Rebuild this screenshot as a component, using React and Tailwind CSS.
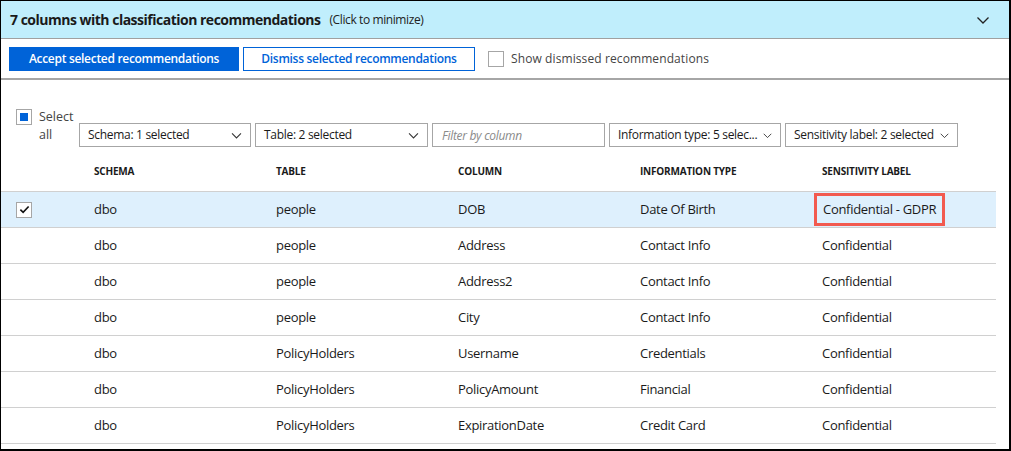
import React, { useState } from "react";

const rows = [
  { schema: "dbo", table: "people", column: "DOB", info: "Date Of Birth", label: "Confidential - GDPR", selected: true },
  { schema: "dbo", table: "people", column: "Address", info: "Contact Info", label: "Confidential" },
  { schema: "dbo", table: "people", column: "Address2", info: "Contact Info", label: "Confidential" },
  { schema: "dbo", table: "people", column: "City", info: "Contact Info", label: "Confidential" },
  { schema: "dbo", table: "PolicyHolders", column: "Username", info: "Credentials", label: "Confidential" },
  { schema: "dbo", table: "PolicyHolders", column: "PolicyAmount", info: "Financial", label: "Confidential" },
  { schema: "dbo", table: "PolicyHolders", column: "ExpirationDate", info: "Credit Card", label: "Confidential" },
];

const Chevron = ({ className }) => (
  <svg className={className} viewBox="0 0 16 16" fill="none" stroke="currentColor" strokeWidth={1.3}>
    <path d="M2.5 5.5L8 11l5.5-5.5" />
  </svg>
);

const Dropdown = ({ label, width, small }) => (
  <div
    className={`flex items-center justify-between h-[24px] border border-[#a6a6a6] bg-white pl-[8px] pr-[7px] text-[12px] tracking-[-0.3px] text-[#1a1a1a] ${width}`}
  >
    <span className="whitespace-nowrap">{label}</span>
    <Chevron
      className={`${small ? "w-[11px] h-[11px]" : "w-[13px] h-[13px]"} ml-[3px] shrink-0 text-[#333]`}
    />
  </div>
);

const App = () => {
  const [showDismissed, setShowDismissed] = useState(false);

  return (
    <div
      className="w-[1011px] h-[451px] bg-white border-t border-l border-r-2 border-b-2 border-black overflow-hidden text-[#1a1a1a]"
      style={{ fontFamily: '"Open Sans", "Noto Sans", sans-serif' }}
    >
      {/* Header bar */}
      <div className="h-[38px] bg-[#c0eefc] border-b border-[#a0a0a0] flex items-center pl-[9px] pr-[18px]">
        <span className="text-[14px] font-bold tracking-[-0.5px]">7 columns with classification recommendations</span>
        <span className="text-[12px] tracking-[-0.4px] ml-[9px] text-[#222]">(Click to minimize)</span>
        <Chevron className="w-[16px] h-[16px] ml-auto text-[#222]" />
      </div>

      {/* Toolbar */}
      <div className="h-[41px] border-b-2 border-[#a6a6a6] flex items-center pl-[8px] gap-[4px]">
        <button className="h-[24px] w-[230px] bg-[#0063d8] text-white text-[12px] font-semibold tracking-[-0.3px]">
          Accept selected recommendations
        </button>
        <button className="h-[24px] w-[232px] bg-white border border-[#0063d8] text-[#0063d8] text-[12px] font-semibold tracking-[-0.3px]">
          Dismiss selected recommendations
        </button>
        <label className="flex items-center ml-[9px] text-[12px] tracking-[0.1px] text-[#444]">
          <input
            type="checkbox"
            checked={showDismissed}
            onChange={(e) => setShowDismissed(e.target.checked)}
            className="appearance-none w-[16px] h-[16px] border border-[#a6a6a6] bg-white mr-[7px]"
          />
          Show dismissed recommendations
        </label>
      </div>

      {/* Filters */}
      <div className="flex items-start pt-[28px] pl-[15px]">
        <div className="flex items-start w-[63px]">
          <div className="w-[16px] h-[16px] border border-[#a6a6a6] flex items-center justify-center mt-[1px]">
            <div className="w-[8px] h-[8px] bg-[#0063d8]" />
          </div>
          <div className="ml-[7px] text-[12.5px] leading-[18px] text-[#444]">
            Select
            <br />
            all
          </div>
        </div>
        <div className="flex items-center gap-[4px] mt-[15px]">
          <Dropdown label="Schema: 1 selected" width="w-[172px]" />
          <Dropdown label="Table: 2 selected" width="w-[173px]" />
          <input
            placeholder="Filter by column"
            className="h-[24px] w-[173px] border border-[#a6a6a6] px-[9px] text-[12px] tracking-[-0.3px] italic placeholder:text-[#8a8a8a] outline-none"
          />
          <Dropdown label="Information type: 5 selec..." width="w-[172px]" small />
          <Dropdown label="Sensitivity label: 2 selected" width="w-[173px]" small />
        </div>
      </div>

      {/* Table */}
      <div className="mt-[1px] w-[995px]">
        <div className="grid grid-cols-[93px_182px_182px_182px_182px_1fr] h-[44px] pt-[4px] items-center border-b border-[#d0d0d0] text-[10px] font-bold uppercase tracking-[-0.2px]">
          <div />
          <div>Schema</div>
          <div>Table</div>
          <div>Column</div>
          <div>Information type</div>
          <div>Sensitivity label</div>
        </div>
        {rows.map((r) => (
          <div
            key={r.column}
            className={`grid grid-cols-[93px_182px_182px_182px_182px_1fr] h-[36px] items-center border-b border-[#d0d0d0] text-[13px] tracking-[-0.3px] ${
              r.selected ? "bg-[#def0fd]" : "bg-white"
            }`}
          >
            <div className="pl-[15px]">
              {r.selected && (
                <div className="w-[16px] h-[16px] border border-[#a6a6a6] bg-white flex items-center justify-center">
                  <svg viewBox="0 0 12 12" className="w-[11px] h-[11px]" fill="none" stroke="#111" strokeWidth={1.8}>
                    <path d="M1.5 6.2l3 3 6-6.5" />
                  </svg>
                </div>
              )}
            </div>
            <div>{r.schema}</div>
            <div>{r.table}</div>
            <div>{r.column}</div>
            <div>{r.info}</div>
            <div>
              {r.selected ? (
                <span className="inline-flex items-center h-[33px] -ml-[8px] px-[6px] border-[3px] border-[#f25a4f]">
                  {r.label}
                </span>
              ) : (
                r.label
              )}
            </div>
          </div>
        ))}
      </div>
    </div>
  );
};

export default App;
